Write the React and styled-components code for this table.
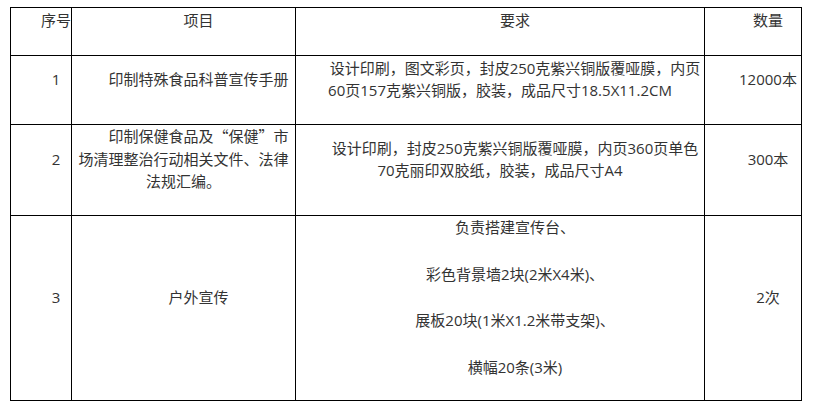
import React from 'react';
import styled, { createGlobalStyle } from 'styled-components';

const GlobalStyle = createGlobalStyle`
    html, body {
        margin: 0;
        padding: 0;
        background: #fff;
    }
    body {
        font-family: "Open Sans", "Noto Sans CJK SC", sans-serif;
        color: #333;
    }
`;

const StyledPage = styled.div`
    padding: 7px 0 0 10px;
`;

const StyledTable = styled.div`
    display: grid;
    grid-template-columns: 61px 224px 409px 97px;
    grid-template-rows: 48px 69px 91px 185px;
    width: max-content;
    border-left: 1px solid #000;
    border-top: 1px solid #000;
`;

const StyledCell = styled.div`
    box-sizing: border-box;
    display: flex;
    flex-direction: column;
    justify-content: center;
    padding: 0 0 22px;
    border-right: 1px solid #000;
    border-bottom: 1px solid #000;
    text-align: center;
    text-indent: 2em;
    font-size: 15px;
    line-height: 22.5px;
    white-space: nowrap;
    > p + p {
        margin-top: 24px;
    }
`;

const Para = styled.p`
    margin: 0;
`;

const Quote = styled.span`
    font-family: "Noto Sans CJK SC", sans-serif;
`;

const rows = [
    {
        no: '1',
        item: ['印制特殊食品科普宣传手册'],
        req: [['设计印刷，图文彩页，封皮250克紫兴铜版覆哑膜，内页', '60页157克紫兴铜版，胶装，成品尺寸18.5X11.2CM']],
        qty: '12000本',
    },
    {
        no: '2',
        item: [
            <>印制保健食品及<Quote>“</Quote>保健<Quote>”</Quote>市</>,
            '场清理整治行动相关文件、法律',
            '法规汇编。',
        ],
        req: [['设计印刷，封皮250克紫兴铜版覆哑膜，内页360页单色', '70克丽印双胶纸，胶装，成品尺寸A4']],
        qty: '300本',
    },
    {
        no: '3',
        item: ['户外宣传'],
        req: [
            ['负责搭建宣传台、'],
            ['彩色背景墙2块(2米X4米)、'],
            ['展板20块(1米X1.2米带支架)、'],
            ['横幅20条(3米)'],
        ],
        qty: '2次',
    },
];

const Lines = ({ lines }) =>
    lines.map((line, i) => (
        <React.Fragment key={i}>
            {i > 0 && <br />}
            {line}
        </React.Fragment>
    ));

const App = () => {
    return (
        <StyledPage>
            <GlobalStyle />
            <StyledTable>
                <StyledCell><Para>序号</Para></StyledCell>
                <StyledCell><Para>项目</Para></StyledCell>
                <StyledCell><Para>要求</Para></StyledCell>
                <StyledCell><Para>数量</Para></StyledCell>
                {rows.map((row) => (
                    <React.Fragment key={row.no}>
                        <StyledCell><Para>{row.no}</Para></StyledCell>
                        <StyledCell><Para><Lines lines={row.item} /></Para></StyledCell>
                        <StyledCell>
                            {row.req.map((p, i) => (
                                <Para key={i}><Lines lines={p} /></Para>
                            ))}
                        </StyledCell>
                        <StyledCell><Para>{row.qty}</Para></StyledCell>
                    </React.Fragment>
                ))}
            </StyledTable>
        </StyledPage>
    );
};

export default App;
